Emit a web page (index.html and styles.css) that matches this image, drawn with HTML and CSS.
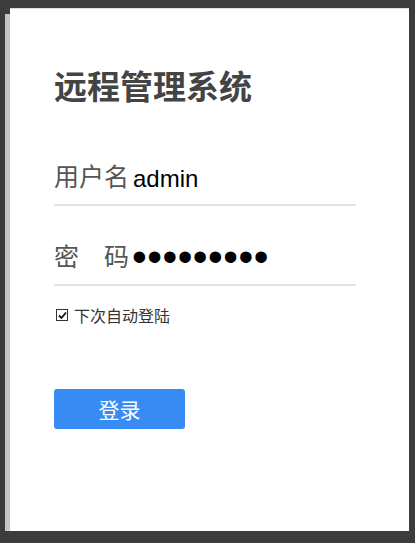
FILE: index.html
```html
<!DOCTYPE html>
<html lang="zh-CN">
<head>
    <meta charset="UTF-8">
    <meta name="viewport" content="width=device-width, initial-scale=1.0">
    <title>远程管理系统</title>
    <link rel="stylesheet" href="styles.css">
</head>
<body>
    <div class="card">
        <h1 class="title">远程管理系统</h1>

        <form class="login-form" onsubmit="return false;">
            <div class="field">
                <label class="field-label" for="username">用户名</label>
                <input class="field-input" type="text" id="username" value="admin">
            </div>
            <div class="field">
                <label class="field-label" for="password">密　码</label>
                <input class="field-input password" type="password" id="password" value="123456789">
            </div>

            <label class="remember">
                <input type="checkbox" class="remember-input" checked>
                <span class="remember-box">
                    <svg width="9" height="9" viewBox="0 0 9 9"><path d="M1 4.5 L3.5 7 L8 1.5" fill="none" stroke="#111" stroke-width="1.8"/></svg>
                </span>
                下次自动登陆
            </label>

            <button class="login-btn" type="submit">登录</button>
        </form>
    </div>
</body>
</html>
```

FILE: styles.css
```css
body {
    margin: 0;
    background: #3c3c3c;
    font-family: "Noto Sans CJK SC", "Noto Sans", sans-serif;
}
.card {
    box-sizing: border-box;
    width: 399px;
    height: 523px;
    margin: 8px 0 0 10px;
    padding: 54px 53px 0 44px;
    background: #fff;
    border-top: 1px solid #ddd;
    box-shadow: -5px 6px 0 #c6c6c6;
}
.title {
    margin: 0;
    font-size: 33px;
    line-height: 44px;
    font-weight: bold;
    color: #444;
}
.login-form {
    margin-top: 49px;
}
.field {
    display: flex;
    align-items: flex-end;
    height: 48px;
    border-bottom: 2px solid #e3e3e3;
    margin-bottom: 30px;
}
.field-label {
    font-size: 25px;
    line-height: 34px;
    color: #555;
    padding-bottom: 12px;
    white-space: nowrap;
}
.field-input {
    flex: 1;
    min-width: 0;
    border: none;
    outline: none;
    padding: 0 0 0 4px;
    margin: 0 0 10px 0;
    font-family: "Liberation Sans", Arial, sans-serif;
    font-size: 24px;
    line-height: 30px;
    height: 30px;
    color: #000;
    background: transparent;
}
.field-input.password {
    font-size: 42px;
    line-height: 30px;
    letter-spacing: 0.5px;
    padding-left: 3px;
    margin-bottom: 12px;
}
.remember {
    display: flex;
    align-items: center;
    margin-top: -12px;
    font-size: 16px;
    line-height: 22px;
    color: #333;
    cursor: pointer;
}
.remember-input {
    position: absolute;
    opacity: 0;
    width: 0;
    height: 0;
    margin: 0;
}
.remember-box {
    box-sizing: border-box;
    width: 12px;
    height: 12px;
    margin: 0 6px 0 2px;
    border: 1px solid #333;
    display: flex;
    align-items: center;
    justify-content: center;
}
.login-btn {
    display: block;
    width: 131px;
    height: 40px;
    margin-top: 63px;
    border: none;
    border-radius: 3px;
    background: #388bf2;
    color: #fff;
    font-family: "Noto Sans CJK SC", sans-serif;
    font-size: 21px;
    cursor: pointer;
    padding: 0;
}
.login-btn:hover {
    background: #2a7be0;
}
```
